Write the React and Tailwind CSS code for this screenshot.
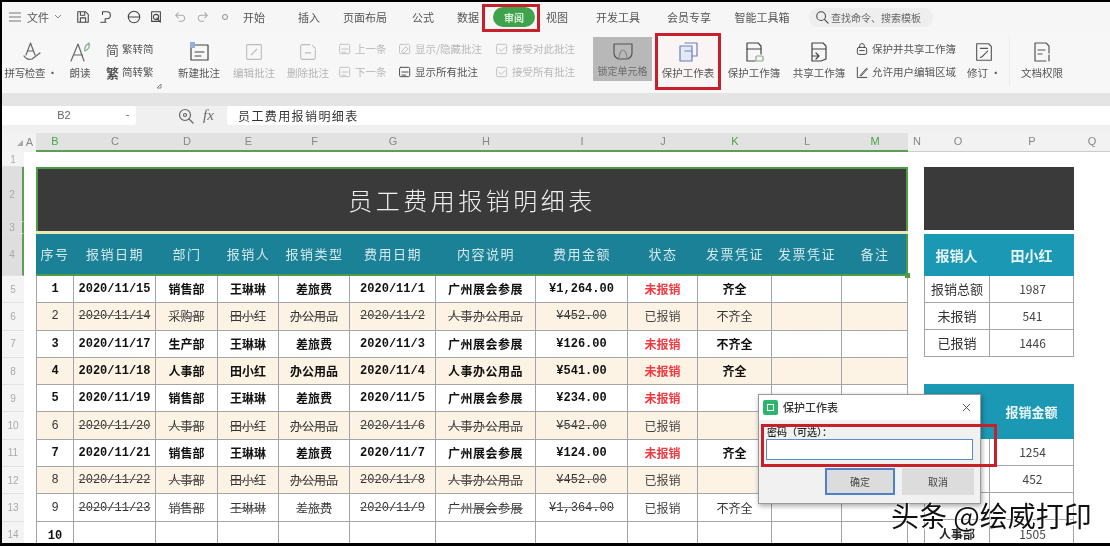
import React from 'react';

const rows = [
  { no: '1', date: '2020/11/15', dept: '销售部', name: '王琳琳', type: '差旅费', day: '2020/11/1', desc: '广州展会参展', amount: '¥1,264.00', status: '未报销', doc: '齐全' },
  { no: '2', date: '2020/11/14', dept: '采购部', name: '田小红', type: '办公用品', day: '2020/11/2', desc: '人事办公用品', amount: '¥452.00', status: '已报销', doc: '不齐全', done: true, tint: true },
  { no: '3', date: '2020/11/17', dept: '生产部', name: '王琳琳', type: '差旅费', day: '2020/11/3', desc: '广州展会参展', amount: '¥126.00', status: '未报销', doc: '不齐全' },
  { no: '4', date: '2020/11/18', dept: '人事部', name: '田小红', type: '办公用品', day: '2020/11/4', desc: '人事办公用品', amount: '¥541.00', status: '未报销', doc: '齐全', tint: true },
  { no: '5', date: '2020/11/19', dept: '销售部', name: '王琳琳', type: '差旅费', day: '2020/11/5', desc: '广州展会参展', amount: '¥234.00', status: '未报销', doc: '' },
  { no: '6', date: '2020/11/20', dept: '人事部', name: '田小红', type: '办公用品', day: '2020/11/6', desc: '人事办公用品', amount: '¥542.00', status: '已报销', doc: '', done: true, tint: true },
  { no: '7', date: '2020/11/21', dept: '销售部', name: '王琳琳', type: '差旅费', day: '2020/11/7', desc: '广州展会参展', amount: '¥124.00', status: '未报销', doc: '齐全' },
  { no: '8', date: '2020/11/22', dept: '人事部', name: '田小红', type: '办公用品', day: '2020/11/8', desc: '人事办公用品', amount: '¥452.00', status: '已报销', doc: '', done: true, tint: true },
  { no: '9', date: '2020/11/23', dept: '销售部', name: '王琳琳', type: '差旅费', day: '2020/11/9', desc: '广州展会参展', amount: '¥1,364.00', status: '已报销', doc: '不齐全', done: true },
];

const headers = ['序号', '报销日期', '部门', '报销人', '报销类型', '费用日期', '内容说明', '费用金额', '状态', '发票凭证', '发票凭证', '备注'];
const gridCols = 'grid grid-cols-[38px_82px_62px_61px_71px_86px_100px_92px_70px_74px_70px_66px]';
const mono = "font-['Liberation_Mono',monospace]";

function Ico({ className = 'w-[22px] h-[22px]', vb = '0 0 24 24', stroke = '#666', children }) {
  return (
    <svg viewBox={vb} className={className} fill="none" stroke={stroke} strokeWidth="1.2" strokeLinecap="round" strokeLinejoin="round">
      {children}
    </svg>
  );
}

function BigBtn({ className, label, icon, muted }) {
  return (
    <div className={`flex flex-col items-center pt-[8px] shrink-0 ${className}`}>
      <div className="h-[24px] flex items-center justify-center">{icon}</div>
      <div className={`mt-[2px] text-[10.5px] leading-[14px] whitespace-nowrap ${muted ? 'text-[#b4b4b4]' : 'text-[#555]'}`}>{label}</div>
    </div>
  );
}

function SmallBtn({ icon, label, muted }) {
  return (
    <div className={`h-[20px] flex items-center gap-[3px] text-[10.5px] whitespace-nowrap ${muted ? 'text-[#b8b8b8]' : 'text-[#555]'}`}>
      {icon}
      <span>{label}</span>
    </div>
  );
}

function SmallIcon({ stroke = '#c0c0c0', d = 'M5 9h8M5 13h5' }) {
  return (
    <Ico className="w-[14px] h-[14px] shrink-0" vb="0 0 18 18" stroke={stroke}>
      <rect x="2" y="3" width="13" height="12" rx="1.5" />
      <path d={d} />
    </Ico>
  );
}

function TopBar() {
  const tab = 'shrink-0 text-center text-[11px] text-[#555]';
  return (
    <div className="h-[30px] bg-[#f6f6f6] flex items-center shrink-0">
      <svg viewBox="0 0 14 12" className="ml-[6px] w-[14px] h-[12px] shrink-0" stroke="#777" strokeWidth="1">
        <path d="M1 2h12M1 6h12M1 10h12" />
      </svg>
      <div className={`ml-[5px] w-[22px] ${tab}`}>文件</div>
      <svg viewBox="0 0 8 6" className="ml-[5px] w-[8px] h-[6px] shrink-0" fill="none" stroke="#888">
        <path d="M1 1l3 3 3-3" />
      </svg>
      <Ico className="ml-[14px] w-[14px] h-[14px] shrink-0" vb="0 0 16 16" stroke="#444">
        <path d="M2 2h9l3 3v9H2zM5 2v4h5V2M5 14V9h6v5" />
      </Ico>
      <Ico className="ml-[9px] w-[14px] h-[14px] shrink-0" vb="0 0 16 16" stroke="#444">
        <path d="M4 2h5a4 4 0 0 1 0 8H7v4M4 2v3M2 14h6" />
      </Ico>
      <Ico className="ml-[14px] w-[14px] h-[14px] shrink-0" vb="0 0 16 16" stroke="#444">
        <circle cx="8" cy="8" r="6.5" />
        <path d="M1.5 8h13" />
      </Ico>
      <Ico className="ml-[8px] w-[14px] h-[14px] shrink-0" vb="0 0 16 16" stroke="#444">
        <path d="M3 2h10v11H3zM9 9l4 5" />
        <circle cx="8" cy="8" r="3" />
      </Ico>
      <Ico className="ml-[11px] w-[12px] h-[12px] shrink-0" vb="0 0 14 14" stroke="#aaa">
        <path d="M2 5h7a3.5 3.5 0 0 1 0 7H6M2 5l3-3M2 5l3 3" />
      </Ico>
      <Ico className="ml-[11px] w-[12px] h-[12px] shrink-0" vb="0 0 14 14" stroke="#aaa">
        <path d="M12 5H5a3.5 3.5 0 0 0 0 7h3M12 5L9 2M12 5L9 8" />
      </Ico>
      <svg viewBox="0 0 8 8" className="ml-[12px] w-[8px] h-[8px] shrink-0" fill="none" stroke="#888">
        <circle cx="4" cy="4" r="2.5" />
      </svg>
      <div className={`ml-[5px] w-[40px] ${tab}`}>开始</div>
      <div className={`ml-[15px] w-[40px] ${tab}`}>插入</div>
      <div className={`ml-[8px] w-[56px] ${tab}`}>页面布局</div>
      <div className={`ml-[10px] w-[40px] ${tab}`}>公式</div>
      <div className={`ml-[5px] w-[40px] ${tab}`}>数据</div>
      <div className="ml-[5px] w-[42px] h-[20px] rounded-full bg-[#3fa34d] text-[#d9f0d9] text-[10px] font-bold flex items-center justify-center shrink-0">审阅</div>
      <div className={`ml-[2px] w-[40px] ${tab}`}>视图</div>
      <div className={`ml-[13px] w-[56px] ${tab}`}>开发工具</div>
      <div className={`ml-[15px] w-[56px] ${tab}`}>会员专享</div>
      <div className={`ml-[13px] w-[64px] ${tab}`}>智能工具箱</div>
      <div className="ml-[15px] w-[124px] h-[19px] rounded-[9px] bg-[#eeeeee] flex items-center pl-[6px] gap-[2px] text-[10px] text-[#666] shrink-0">
        <Ico className="w-[14px] h-[14px] shrink-0" vb="0 0 16 16" stroke="#444">
          <circle cx="7" cy="7" r="5" />
          <path d="M11 11l4 4" />
        </Ico>
        <span className="whitespace-nowrap">查找命令、搜索模板</span>
      </div>
    </div>
  );
}

function Ribbon() {
  return (
    <div className="h-[61px] bg-[#f7f7f7] flex items-start shrink-0">
      <BigBtn className="ml-[2px] w-[54px] tracking-[-0.3px]" label="拼写检查 ·" icon={
        <Ico className="w-[26px] h-[24px]" stroke="#666">
          <path d="M7 15l4.500-12 4.500 12M8.500 11h6M5 16c2 3 5 4 8 3l8-6" />
        </Ico>
      } />
      <BigBtn className="ml-[2px] w-[40px]" label="朗读" icon={
        <Ico className="w-[26px] h-[24px]" stroke="#666">
          <path d="M3 21L10 4l6 17M5.500 15h9" />
          <path d="M17 11c-1-3 1-6 4-8 1 3 0 6-4 8z" stroke="#7fb08a" />
        </Ico>
      } />
      <div className="ml-[6px] w-[56px] pt-[7px] flex flex-col gap-[3px] shrink-0">
        <SmallBtn label="繁转简" icon={<span className="text-[13px] leading-none">简</span>} />
        <SmallBtn label="简转繁" icon={<span className="text-[13px] leading-none font-bold">繁</span>} />
        <svg viewBox="0 0 6 6" className="self-end w-[6px] h-[6px] -mt-[2px]" fill="none" stroke="#888">
          <path d="M1 5l4-4v4z" />
        </svg>
      </div>
      <BigBtn className="ml-[13px] w-[48px]" label="新建批注" icon={
        <Ico className="w-[24px] h-[24px]" stroke="#444">
          <path d="M7 5h14v15H4V8" />
          <path d="M8 12h9M8 16h6" />
          <rect x="3" y="2" width="5" height="6" fill="#8fb2dd" stroke="none" />
        </Ico>
      } />
      <BigBtn className="ml-[6px] w-[50px]" label="编辑批注" muted icon={
        <Ico stroke="#bdbdbd">
          <rect x="4" y="4" width="16" height="16" rx="1" />
          <path d="M9 15l6-6" />
        </Ico>
      } />
      <BigBtn className="ml-[4px] w-[50px]" label="删除批注" muted icon={
        <Ico stroke="#bdbdbd">
          <path d="M14 4H6a2 2 0 0 0-2 2v12a2 2 0 0 0 2 2h12a2 2 0 0 0 2-2v-8" />
          <path d="M9 13h6M17 5l3 3" />
        </Ico>
      } />
      <div className="ml-[5px] w-[54px] pt-[7px] flex flex-col gap-[3px] shrink-0">
        <SmallBtn muted label="上一条" icon={<SmallIcon />} />
        <SmallBtn muted label="下一条" icon={<SmallIcon />} />
      </div>
      <div className="ml-[6px] w-[92px] pt-[7px] flex flex-col gap-[3px] shrink-0">
        <SmallBtn muted label="显示/隐藏批注" icon={<SmallIcon d="M5 12l5-6 3 3-5 5z" />} />
        <SmallBtn label="显示所有批注" icon={<SmallIcon stroke="#444" />} />
      </div>
      <div className="ml-[5px] w-[90px] pt-[7px] flex flex-col gap-[3px] shrink-0">
        <SmallBtn muted label="接受对此批注" icon={<SmallIcon d="M5 9l3 3 5-5" />} />
        <SmallBtn muted label="接受所有批注" icon={<SmallIcon d="M5 9l3 3 5-5" />} />
      </div>
      <div className="ml-[8px] mt-[5px] w-[59px] h-[44px] bg-[#b8b8b8] flex flex-col items-center pt-[3px] shrink-0">
        <Ico className="w-[26px] h-[24px]" stroke="#555">
          <path d="M3 4h18v9a6 6 0 0 1-6 6H9a6 6 0 0 1-6-6z" />
          <path d="M8 19c0-5 2-9 4-9s4 4 4 9" stroke="#888" />
        </Ico>
        <div className="text-[10px] leading-[14px] text-[#6a6a6a] whitespace-nowrap">锁定单元格</div>
      </div>
      <BigBtn className="ml-[4px] w-[64px] h-[57px] bg-[#fbf4f5]" label="保护工作表" icon={
        <Ico className="w-[26px] h-[24px]" stroke="#6b82b5">
          <path d="M9 3h12v13h-5" />
          <path d="M4 6h12v15H4zM9 11h7" fill="#e3e8f6" />
        </Ico>
      } />
      <BigBtn className="ml-[4px] w-[60px]" label="保护工作簿" icon={
        <Ico className="w-[24px] h-[24px]" stroke="#444">
          <path d="M5 3h11l3 3v8M5 3v18h8" />
          <path d="M5 9h14" />
          <rect x="14" y="16" width="7" height="5" rx="1" stroke="#8aa58a" />
        </Ico>
      } />
      <BigBtn className="ml-[6px] w-[58px]" label="共享工作簿" icon={
        <Ico className="w-[24px] h-[24px]" stroke="#444">
          <path d="M5 3h11l3 3v13l-5 2H5zM5 9h14M9 13l3 3-3 3M5 16h7" />
        </Ico>
      } />
      <div className="ml-[7px] w-[108px] pt-[7px] flex flex-col gap-[3px] shrink-0">
        <SmallBtn label="保护并共享工作簿" icon={
          <Ico className="w-[14px] h-[14px] shrink-0" vb="0 0 18 18" stroke="#444">
            <rect x="3" y="7" width="12" height="9" rx="2" />
            <path d="M6 7V5a3 3 0 0 1 6 0v2M6 11h6" />
          </Ico>
        } />
        <SmallBtn label="允许用户编辑区域" icon={
          <Ico className="w-[14px] h-[14px] shrink-0" vb="0 0 18 18" stroke="#444">
            <path d="M3 3v13h12M7 13l8-9 1 1-8 9z" />
          </Ico>
        } />
      </div>
      <BigBtn className="ml-[5px] w-[32px]" label="修订 ·" icon={
        <Ico className="w-[22px] h-[24px]" stroke="#555">
          <path d="M4 3h13l3 3v15H4zM8 8h8M8 18c2 0 3-2 8-7" />
        </Ico>
      } />
      <div className="ml-[9px] mt-[4px] w-px h-[50px] bg-[#ececec] shrink-0" />
      <BigBtn className="ml-[10px] w-[44px]" label="文档权限" icon={
        <Ico className="w-[24px] h-[24px]" stroke="#555">
          <path d="M5 3h11l3 3v7M5 3v18h11M8 10h7M8 14h4M19 15v6" />
        </Ico>
      } />
    </div>
  );
}

function FormulaBar() {
  return (
    <div className="h-[19px] bg-[#f0f0f0] flex items-center shrink-0">
      <div className="w-[134px] h-full bg-white rounded-r-[3px] flex items-center shrink-0">
        <span className="w-[124px] text-center text-[11px] text-[#666] font-['Liberation_Sans',sans-serif]">B2</span>
        <span className="w-[3px] h-[1px] bg-[#888]" />
      </div>
      <Ico className="ml-[42px] w-[16px] h-[16px] shrink-0" vb="0 0 16 16" stroke="#666">
        <circle cx="7" cy="7" r="5.500" />
        <circle cx="7" cy="7" r="1.500" />
        <path d="M11 11l4 4" />
      </Ico>
      <span className="ml-[9px] w-[15px] text-[15px] italic font-['Liberation_Serif',serif] text-[#666] leading-none shrink-0">fx</span>
      <div className="ml-[9px] flex-1 h-full bg-white rounded-l-[3px] pl-[11px] flex items-center text-[12px] tracking-[1.4px] text-[#333] whitespace-nowrap">员工费用报销明细表</div>
    </div>
  );
}

function ColumnHeader() {
  const letters = [
    ['B', true], ['C'], ['D'], ['E'], ['F'], ['G'], ['H'], ['I'], ['J'], ['K', true], ['L'], ['M', true],
  ];
  return (
    <div className="h-[19px] flex shrink-0 text-[11px] text-[#888] font-['Liberation_Sans',sans-serif]">
      <div className="w-[34px] bg-[#f2f2f2] flex items-center justify-end pr-[3px] gap-[3px] shrink-0">
        <span className="w-0 h-0 border-l-[6px] border-l-transparent border-b-[6px] border-b-[#aaa]" />
        <span>A</span>
      </div>
      <div className={`${gridCols} bg-[#e2e2e2] border-b-2 border-[#5c9e54]`}>
        {letters.map(([l, on]) => (
          <div key={l} className={`flex items-center justify-center ${on ? 'text-[#4aa34a]' : ''}`}>{l}</div>
        ))}
      </div>
      <div className="flex-1 bg-[#f2f2f2] border-b border-[#ccc] flex">
        <div className="w-[18px] text-center">N</div>
        <div className="w-[64px] text-center">O</div>
        <div className="w-[84px] text-center">P</div>
        <div className="w-[36px] text-center">Q</div>
      </div>
    </div>
  );
}

function RowNumbers() {
  const cell = 'flex items-center justify-center border-b border-[#e2e2e2]';
  return (
    <div className="w-[22px] bg-[#f4f4f4] text-[10px] text-[#aaa] shrink-0 font-['Liberation_Sans',sans-serif]">
      <div className={`h-[15px] ${cell}`}>1</div>
      <div className={`h-[55px] ${cell} bg-[#dedede] border-r-2 border-r-[#5c9e54]`}>2</div>
      <div className={`h-[12px] ${cell} bg-[#dedede] border-r-2 border-r-[#5c9e54]`}>3</div>
      <div className={`h-[42px] ${cell} bg-[#dedede] border-r-2 border-r-[#5c9e54]`}>4</div>
      {['5', '6', '7', '8', '9', '10', '11', '12', '13', '14'].map((n) => (
        <div key={n} className={`h-[27.3px] ${cell}`}>{n}</div>
      ))}
    </div>
  );
}

function DataRow({ row }) {
  const base = `flex items-center justify-center border-r border-b border-[#a2a6aa] whitespace-nowrap overflow-hidden ${row.tint ? 'bg-[#fdf3e4]' : 'bg-white'}`;
  const weight = row.done ? 'font-normal text-[#333] line-through decoration-[#777]' : 'font-bold text-[#111]';
  const noWeight = row.done ? 'font-normal text-[#333]' : 'font-bold text-[#111]';
  const tCell = `${base} text-[12px] ${weight}`;
  const mCell = `${base} ${mono} text-[12px] ${weight}`;
  return (
    <div className={`${gridCols} h-[27.3px]`}>
      <div className={`${base} border-l ${mono} text-[12px] ${noWeight}`}>{row.no}</div>
      <div className={mCell}>{row.date}</div>
      <div className={tCell}>{row.dept}</div>
      <div className={tCell}>{row.name}</div>
      <div className={tCell}>{row.type}</div>
      <div className={mCell}>{row.day}</div>
      <div className={`${tCell} tracking-[0.5px]`}>{row.desc}</div>
      <div className={mCell}>{row.amount}</div>
      <div className={`${base} text-[12px] ${row.done ? 'text-[#444]' : 'font-bold text-[#f03a42]'}`}>{row.status}</div>
      <div className={`${base} text-[12px] ${noWeight}`}>{row.doc}</div>
      <div className={base} />
      <div className={base} />
    </div>
  );
}

function SheetTable() {
  return (
    <div className="relative w-[872px] shrink-0">
      <div className="h-[64px] bg-[#3a3a3a] border-t-2 border-x-2 border-[#4f9a45] flex items-center justify-center text-[24px] tracking-[3.5px] text-[#f0f0f0] font-light">
        员工费用报销明细表
      </div>
      <div className="h-[3px] bg-[#e9e7b4]" />
      <div className={`${gridCols} h-[42px] bg-[#1a8197] border-b-2 border-r-2 border-[#4f9a45]`}>
        {headers.map((h, i) => (
          <div key={i} className="flex items-center justify-center text-[13px] tracking-[1.5px] text-[#d5e8ec] whitespace-nowrap">{h}</div>
        ))}
      </div>
      {/* selection handle */}
      <div className="absolute left-[869px] top-[106px] w-[5px] h-[5px] bg-[#4f9a45]" />
      {rows.map((row) => <DataRow key={row.no} row={row} />)}
      <div className={`${gridCols} h-[28px]`}>
        <div className={`border-l border-r border-[#a2a6aa] flex items-center justify-center ${mono} text-[12px] font-bold text-[#111]`}>10</div>
        {[...Array(11)].map((_, i) => <div key={i} className="border-r border-[#a2a6aa]" />)}
      </div>
    </div>
  );
}

function SidePanel() {
  const row = 'grid grid-cols-[65px_85px] h-[27px] border-b border-x border-[#a2a6aa] text-[13px] text-[#333]';
  const left = 'flex items-center justify-center border-r border-[#a2a6aa]';
  const right = 'flex items-center justify-center text-[#444] text-[12px]';
  return (
    <div className="ml-[16px] w-[150px] shrink-0">
      <div className="h-[63px] bg-[#3a3a3a]" />
      <div className="h-[4px]" />
      <div className="grid grid-cols-[65px_85px] h-[42px] bg-[#1b98b3] text-[14px] font-bold text-[#e8f4f6]">
        <div className="flex items-center justify-center">报销人</div>
        <div className="flex items-center justify-center">田小红</div>
      </div>
      {[['报销总额', '1987'], ['未报销', '541'], ['已报销', '1446']].map(([a, b]) => (
        <div key={a} className={row}>
          <div className={left}>{a}</div>
          <div className={right}>{b}</div>
        </div>
      ))}
      <div className="h-[27px]" />
      <div className="grid grid-cols-[65px_85px] h-[55px] bg-[#1b98b3] text-[13px] font-bold text-[#e8f4f6]">
        <div className="flex items-center justify-center">部门</div>
        <div className="flex items-center justify-center">报销金额</div>
      </div>
      {[['销售部', '1254'], ['采购部', '452'], ['', '']].map(([a, b], i) => (
        <div key={i} className={row}>
          <div className={left}>{a}</div>
          <div className={right}>{b}</div>
        </div>
      ))}
      <div className="grid grid-cols-[65px_85px] h-[28px] border-x border-[#a2a6aa] text-[12px] text-[#222]">
        <div className={`${left} font-bold`}>人事部</div>
        <div className={right}>1505</div>
      </div>
    </div>
  );
}

function ProtectDialog() {
  return (
    <div className="absolute left-[758px] top-[394px] w-[223px] h-[110px] bg-[#f1f1f1] border border-[#9a9a9a] shadow-[1px_2px_5px_rgba(0,0,0,0.35)] flex flex-col">
      <div className="h-[25px] bg-white flex items-center pl-[4px] shrink-0">
        <div className="w-[15px] h-[15px] rounded-[2px] bg-[#2db56f] flex items-center justify-center">
          <div className="w-[7px] h-[7px] border border-white" />
        </div>
        <span className="ml-[5px] text-[11px] font-medium text-[#333]">保护工作表</span>
        <svg viewBox="0 0 10 10" className="ml-auto mr-[9px] w-[9px] h-[9px]" stroke="#444" strokeWidth="1">
          <path d="M1 1l8 8M9 1l-8 8" />
        </svg>
      </div>
      <div className="mt-[6px] pl-[8px] text-[10px] leading-[12px] text-[#222] font-medium">密码（可选）：</div>
      <div className="mx-[7px] mt-[1px] h-[21px] bg-white border border-[#5b8bc8] shrink-0" />
      <div className="mt-[8px] flex justify-end gap-[7px] pr-[6px]">
        <div className="w-[70px] h-[27px] bg-[#dcdcdc] border-2 border-[#4d82c9] flex items-center justify-center text-[10px] text-[#444]">确定</div>
        <div className="w-[72px] h-[27px] bg-[#dcdcdc] flex items-center justify-center text-[10px] text-[#444]">取消</div>
      </div>
    </div>
  );
}

export default function App() {
  return (
    <div className="relative w-[1110px] h-[546px] overflow-hidden bg-black pt-[2px] pl-[2px] pb-[3px] blur-[0.5px] font-['Noto_Sans_CJK_SC','Liberation_Sans',sans-serif]">
      <div className="h-full bg-white flex flex-col overflow-hidden">
        <TopBar />
        <Ribbon />
        <div className="h-[13px] bg-[#e4e4e4] shrink-0" />
        <FormulaBar />
        <div className="h-[8px] bg-[#f0f0f0] shrink-0" />
        <ColumnHeader />
        <div className="flex-1 flex bg-white min-h-0">
          <RowNumbers />
          <div className="w-[12px] shrink-0" />
          <div className="pt-[15px] flex shrink-0">
            <SheetTable />
            <SidePanel />
          </div>
        </div>
      </div>

      {/* red highlight boxes drawn over the ribbon */}
      <div className="absolute left-[482px] top-[4px] w-[58px] h-[28px] border-[3px] border-[#c8202a]" />
      <div className="absolute left-[655px] top-[33px] w-[66px] h-[57px] border-[3px] border-[#c8202a]" />

      <ProtectDialog />
      <div className="absolute left-[761px] top-[424px] w-[236px] h-[43px] border-[3px] border-[#c8202a]" />

      <div className="absolute left-[891px] top-[497px] text-[28px] leading-[36px] font-normal text-[#111] whitespace-nowrap [text-shadow:0_0_2px_#ffffff,1px_1px_1px_#ffffff]">
        头条 @绘威打印
      </div>
    </div>
  );
}
